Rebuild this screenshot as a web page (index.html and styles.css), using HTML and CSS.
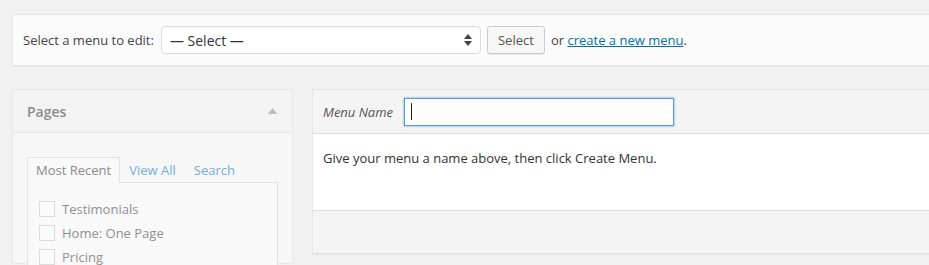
FILE: index.html
```html
<!DOCTYPE html>
<html lang="en">
<head>
    <meta charset="UTF-8">
    <meta name="viewport" content="width=device-width, initial-scale=1.0">
    <title>Menus</title>
    <link rel="stylesheet" href="styles.css">
</head>
<body>
    <div class="wrap">
        <div class="manage-menus">
            <span class="select-label">Select a menu to edit:</span>
            <div class="fake-select">
                <span>&mdash; Select &mdash;</span>
                <svg class="select-arrows" width="8" height="12" viewBox="0 0 8 12">
                    <path d="M4 0 L8 5 L0 5 Z" fill="#444"/>
                    <path d="M0 7 L8 7 L4 12 Z" fill="#444"/>
                </svg>
            </div>
            <button class="button">Select</button>
            <span class="or-text">or <a href="#">create a new menu</a>.</span>
        </div>

        <div class="nav-menus">
            <div class="menu-settings-column">
                <div class="accordion-section">
                    <div class="accordion-title">
                        <span>Pages</span>
                        <svg width="9" height="6" viewBox="0 0 9 6"><path d="M4.5 0 L9 6 L0 6 Z" fill="#bbb"/></svg>
                    </div>
                    <div class="accordion-content">
                        <ul class="tabs">
                            <li class="tab active">Most Recent</li>
                            <li class="tab"><a href="#">View All</a></li>
                            <li class="tab"><a href="#">Search</a></li>
                        </ul>
                        <div class="tab-panel">
                            <label class="check-row"><span class="checkbox"></span>Testimonials</label>
                            <label class="check-row"><span class="checkbox"></span>Home: One Page</label>
                            <label class="check-row"><span class="checkbox"></span>Pricing</label>
                        </div>
                    </div>
                </div>
            </div>

            <div class="menu-management">
                <div class="menu-edit">
                    <div class="menu-header">
                        <span class="menu-name-label">Menu Name</span>
                        <div class="menu-name-input"><span class="caret"></span></div>
                    </div>
                    <div class="menu-body">
                        <p>Give your menu a name above, then click Create Menu.</p>
                    </div>
                    <div class="menu-footer"></div>
                </div>
            </div>
        </div>
    </div>
</body>
</html>
```

FILE: styles.css
```css
* {
    box-sizing: border-box;
}

html, body {
    height: 100%;
}

body {
    margin: 0;
    background-color: #f1f1f1;
    font-family: 'Open Sans', sans-serif;
    font-size: 13px;
    color: #444;
    overflow: hidden;
}

.wrap {
    padding: 14px 0 0 12px;
    margin-right: -40px;
}

/* top bar */

.manage-menus {
    display: flex;
    align-items: center;
    height: 52px;
    padding: 0 10px;
    background-color: #fbfbfb;
    border: 1px solid #e5e5e5;
    box-shadow: 0 1px 1px rgba(0, 0, 0, .04);
}

.select-label {
    margin-right: 7px;
}

.fake-select {
    display: flex;
    align-items: center;
    justify-content: space-between;
    width: 320px;
    height: 28px;
    padding: 0 8px 0 8px;
    background-color: #fff;
    border: 1px solid #ddd;
    border-radius: 4px;
    box-shadow: inset 0 1px 2px rgba(0, 0, 0, .04);
    font-size: 14px;
    color: #333;
}

.button {
    margin-left: 6px;
    height: 28px;
    width: 58px;
    padding: 0 10px;
    font-family: 'Open Sans', sans-serif;
    font-size: 13px;
    color: #555;
    background-color: #f7f7f7;
    border: 1px solid #ccc;
    border-radius: 3px;
    box-shadow: inset 0 1px 0 #fff, 0 1px 0 rgba(0, 0, 0, .08);
}

.or-text {
    margin-left: 6px;
}

.or-text a {
    color: #0073aa;
    text-decoration: underline;
}

/* columns */

.nav-menus {
    display: flex;
    align-items: flex-start;
    margin-top: 23px;
}

.menu-settings-column {
    width: 281px;
    flex-shrink: 0;
    margin-right: 19px;
}

.accordion-section {
    border: 1px solid #e8e8e8;
    background-color: #f7f7f7;
}

.accordion-title {
    display: flex;
    align-items: center;
    justify-content: space-between;
    height: 43px;
    padding: 0 15px 0 14px;
    background-color: #f3f3f3;
    border-bottom: 1px solid #e8e8e8;
    font-size: 14px;
    font-weight: 600;
    color: #8c8c8c;
}

.accordion-content {
    padding: 24px 14px 0;
    height: 130px;
}

.tabs {
    display: flex;
    list-style: none;
    margin: 0;
    padding: 0;
}

.tab {
    height: 26px;
    padding: 0 8px;
    line-height: 24px;
    border: 1px solid transparent;
    margin-bottom: -1px;
    color: #8a8a8a;
}

.tab.active {
    border-color: #e3e3e3;
    border-bottom-color: #f9f9f9;
    background-color: #f9f9f9;
}

.tab a {
    color: #73afd3;
    text-decoration: none;
}

.tab-panel {
    border: 1px solid #e3e3e3;
    background-color: #f9f9f9;
    padding: 18px 11px 0;
    height: 100px;
}

.check-row {
    display: flex;
    align-items: center;
    height: 24px;
    margin-top: -4px;
    margin-bottom: 4px;
    color: #909090;
}

.checkbox {
    width: 16px;
    height: 16px;
    margin-right: 7px;
    border: 1px solid #dcdcdc;
    background-color: #fbfbfb;
}

/* menu edit */

.menu-management {
    flex: 1;
}

.menu-edit {
    border: 1px solid #e5e5e5;
    box-shadow: 0 1px 1px rgba(0, 0, 0, .04);
}

.menu-header {
    display: flex;
    align-items: center;
    height: 44px;
    padding: 0 10px;
    background-color: #f4f4f4;
    border-bottom: 1px solid #dedede;
}

.menu-name-label {
    font-style: italic;
    color: #555;
    margin-right: 11px;
}

.menu-name-input {
    display: flex;
    align-items: center;
    width: 270px;
    height: 28px;
    padding-left: 6px;
    background-color: #fff;
    border: 1px solid #5b9dd9;
    box-shadow: 0 0 2px rgba(30, 140, 190, .8);
}

.caret {
    width: 1px;
    height: 17px;
    background-color: #222;
}

.menu-body {
    height: 77px;
    padding: 0 10px;
    background-color: #fff;
    border-bottom: 1px solid #dedede;
}

.menu-body p {
    margin: 0;
    padding-top: 15px;
    line-height: 18px;
    color: #333;
}

.menu-footer {
    height: 42px;
    background-color: #f4f4f4;
}
```
